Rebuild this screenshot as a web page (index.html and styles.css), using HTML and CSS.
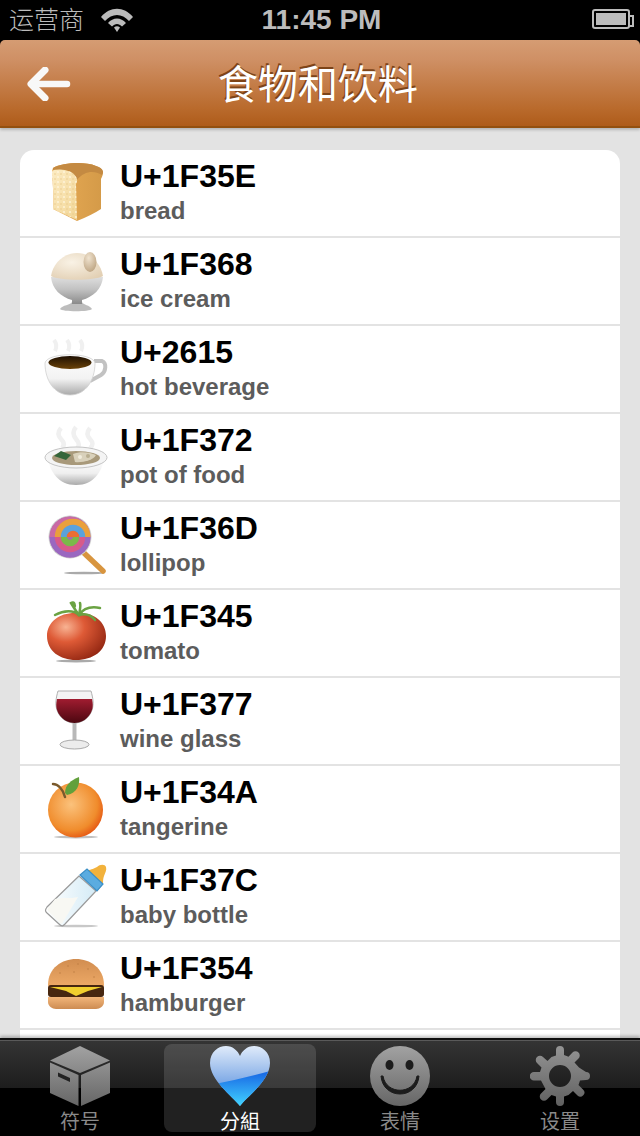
FILE: index.html
```html
<!DOCTYPE html>
<html lang="zh">
<head>
<meta charset="utf-8">
<title>食物和饮料</title>
<link rel="stylesheet" href="styles.css">
</head>
<body>
<div class="app">
  <div class="status">
    <div class="status-left">
      <span class="carrier">运营商</span>
      <svg class="wifi" viewBox="0 0 32 24"><g fill="#bbb"><path d="M0 9C9-2 23-2 32 9L28 13C21 5 11 5 4 13Z"/><path d="M7 15C12 9 20 9 25 15L21 18.500C18 15 14 15 11 18.500Z"/><path d="M13 19.500Q16 17 19 19.500L16 24Z"/></g></svg>
    </div>
    <span class="time">11:45 PM</span>
    <div class="battery"><div class="battery-fill"></div></div>
  </div>
  <header class="nav">
    <svg class="back" width="44" height="34" viewBox="0 0 44 34"><path d="M18 3L4 17L18 31" fill="none" stroke="#f8f8f8" stroke-width="7" stroke-linecap="round" stroke-linejoin="round"/><path d="M6 17H40" fill="none" stroke="#f8f8f8" stroke-width="6.500" stroke-linecap="round"/></svg>
    <h1 class="title">食物和饮料</h1>
  </header>
  <main class="content">
    <ul class="card">
      <li class="row">
        <svg class="emoji" viewBox="0 0 64 64"><defs><linearGradient id="brA" x1="0" y1="0" x2="1" y2="1"><stop offset="0" stop-color="#fcecc4"/><stop offset="1" stop-color="#f2d595"/></linearGradient><linearGradient id="brB" x1="0" y1="0" x2="1" y2="0"><stop offset="0" stop-color="#e8ab55"/><stop offset="1" stop-color="#d49a48"/></linearGradient><pattern id="brP" width="6" height="5" patternUnits="userSpaceOnUse"><circle cx="2" cy="2" r="1.100" fill="#fff6de" fill-opacity=".8"/><circle cx="5" cy="4" r=".9" fill="#e9c98a" fill-opacity=".6"/></pattern></defs><path d="M9 8C18 3 40 1 52 6C60 8 60 14 57 19L57 49Q48 55 33 61L9 49C10 38 9 26 8 15C8 12 8 10 9 8Z" fill="url(#brB)"/><path d="M9 8C18 3 40 1 52 6C60 8 60 13 58 15C50 10 40 11 33 20C28 11 16 9 9 10Z" fill="#c48a42"/><path d="M10 10C18 8 30 11 32 17C34 20 33 22 32 24L33 60L9 49C10 38 9 26 8 15C8 12 8 11 10 10Z" fill="url(#brA)"/><path d="M10 10C18 8 30 11 32 17C34 20 33 22 32 24L33 60L9 49C10 38 9 26 8 15C8 12 8 11 10 10Z" fill="url(#brP)"/></svg>
        <div class="labels"><span class="code">U+1F35E</span><span class="name">bread</span></div>
      </li>
      <li class="row">
        <svg class="emoji" viewBox="0 0 64 64"><defs><linearGradient id="icB" x1="0" y1="0" x2="0" y2="1"><stop offset="0" stop-color="#dedede"/><stop offset=".45" stop-color="#c2c2c2"/><stop offset="1" stop-color="#8a8a8a"/></linearGradient><radialGradient id="icS" cx=".4" cy=".35" r=".75"><stop offset="0" stop-color="#f9f2e5"/><stop offset="1" stop-color="#e2cfb3"/></radialGradient><radialGradient id="icN" cx=".4" cy=".3" r=".8"><stop offset="0" stop-color="#f0e3cf"/><stop offset="1" stop-color="#b99f7c"/></radialGradient></defs><path d="M16 61C18 57 27 57 28 54H38C39 57 46 57 48 61C46 64 18 64 16 61Z" fill="#bdbdbd"/><path d="M7 29H59C58 41 49 49 38 52V56H28V52C17 49 8 41 7 29Z" fill="url(#icB)"/><path d="M7 28C9 15 20 5 33 5C46 5 57 15 59 28C50 33 16 33 7 28Z" fill="url(#icS)"/><ellipse cx="46" cy="14" rx="6.500" ry="10" fill="url(#icN)"/></svg>
        <div class="labels"><span class="code">U+1F368</span><span class="name">ice cream</span></div>
      </li>
      <li class="row">
        <svg class="emoji" viewBox="0 0 64 64"><defs><linearGradient id="cpB" x1="0" y1="0" x2="0" y2="1"><stop offset="0" stop-color="#fff"/><stop offset=".6" stop-color="#f2f2f2"/><stop offset="1" stop-color="#a9a9a9"/></linearGradient><linearGradient id="cpC" x1="0" y1="0" x2="0" y2="1"><stop offset="0" stop-color="#1e1003"/><stop offset="1" stop-color="#6a4208"/></linearGradient></defs><path d="M10 4Q14 9 11 15M23 4Q27 9 24 15M36 4Q40 9 37 15" fill="none" stroke="#f0f0f0" stroke-width="4"/><path d="M50 25H58C63 27 62 36 57 39L46 45" fill="none" stroke="#c2c2c2" stroke-width="4"/><path d="M1 27C3 16 49 16 51 27C51 44 42 59 26 59C10 59 1 44 1 27Z" fill="url(#cpB)" stroke="#d0d0d0" stroke-width=".8"/><ellipse cx="26" cy="26.500" rx="21.500" ry="6.500" fill="url(#cpC)"/></svg>
        <div class="labels"><span class="code">U+2615</span><span class="name">hot beverage</span></div>
      </li>
      <li class="row">
        <svg class="emoji" viewBox="0 0 64 64"><defs><linearGradient id="ptB" x1="0" y1="0" x2="0" y2="1"><stop offset="0" stop-color="#fff"/><stop offset=".55" stop-color="#efefef"/><stop offset="1" stop-color="#aaa"/></linearGradient></defs><path d="M17 4Q12 10 17 15T18 24M32 3Q27 9 32 15T33 24M46 4Q41 10 46 15T46 24" fill="none" stroke="#f0f0f0" stroke-width="4.500"/><path d="M4 35C6 47 14 61 32 61C50 61 58 47 60 35Z" fill="url(#ptB)"/><ellipse cx="32" cy="33.500" rx="31" ry="10.500" fill="#f4f4f4" stroke="#c4c4c4"/><ellipse cx="32" cy="34" rx="24" ry="7" fill="#a8997a"/><path d="M10 32L17 27L27 31L22 36Z" fill="#35663a"/><path d="M29 30C36 27 46 28 52 31C50 36 38 39 31 38Z" fill="#d9d1bb"/><circle cx="36" cy="33" r="2" fill="#f1ecdc"/><circle cx="44" cy="32" r="2" fill="#b9ae90"/></svg>
        <div class="labels"><span class="code">U+1F372</span><span class="name">pot of food</span></div>
      </li>
      <li class="row">
        <svg class="emoji" viewBox="0 0 64 64"><defs><clipPath id="llC"><circle cx="26" cy="25" r="20.500"/></clipPath></defs><ellipse cx="40" cy="61" rx="20" ry="1.300" fill="#aaa"/><path d="M40 41L59 59" stroke="#d8953f" stroke-width="5.500" stroke-linecap="round"/><circle cx="26" cy="25" r="21.500" fill="#cfcfcf"/><g clip-path="url(#llC)"><circle cx="26" cy="25" r="21" fill="#a868b0"/><g transform="translate(26 25)" fill="none" stroke-width="6.500"><path d="M-18 0A21 21 0 0 1 24 0" stroke="#c96aa5"/><path d="M18 0A18 18 0 0 1 -18 0" stroke="#9a68c0"/><path d="M-12 0A15 15 0 0 1 18 0" stroke="#e9a03c"/><path d="M12 0A12 12 0 0 1 -12 0" stroke="#d75a8a"/><path d="M-6 0A9 9 0 0 1 12 0" stroke="#5aa2dc"/><path d="M6 0A6 6 0 0 1 -6 0" stroke="#7ab94a"/><path d="M0 0A3 3 0 0 1 6 0" stroke="#ec6d33"/></g></g></svg>
        <div class="labels"><span class="code">U+1F36D</span><span class="name">lollipop</span></div>
      </li>
      <li class="row">
        <svg class="emoji" viewBox="0 0 64 64"><defs><radialGradient id="tmR" cx=".32" cy=".3" r=".8"><stop offset="0" stop-color="#f8b393"/><stop offset=".4" stop-color="#de5a36"/><stop offset="1" stop-color="#8f2410"/></radialGradient></defs><ellipse cx="32" cy="61" rx="20" ry="1.400" fill="#aaa"/><path d="M3 36C3 21 17 12 33 13C49 12 62 21 62 36C62 51 49 60 32 60C16 60 3 51 3 36Z" fill="url(#tmR)"/><g fill="none" stroke="#6ba343" stroke-width="2.500" stroke-linecap="round"><path d="M35 15C30 10 20 10 11 15"/><path d="M35 15C31 10 29 6 27 3C30 1 32 5 30 8"/><path d="M35 15C39 9 46 6 56 8"/><path d="M35 15C42 13 47 15 51 20"/><path d="M35 15C36 9 37 6 36 3"/></g></svg>
        <div class="labels"><span class="code">U+1F345</span><span class="name">tomato</span></div>
      </li>
      <li class="row">
        <svg class="emoji" viewBox="0 0 64 64"><defs><linearGradient id="wnR" x1="0" y1="0" x2="0" y2="1"><stop offset="0" stop-color="#a01c30"/><stop offset="1" stop-color="#4c0710"/></linearGradient></defs><path d="M14 3H47C49 10 50 16 48 22C45 31 37 35 30.500 35C24 35 16 31 13 22C11 16 12 10 14 3Z" fill="#f4f4f4" stroke="#b0b0b0"/><path d="M13 11H48C49 16 49 19 48 22C45 31 37 35 30.500 35C24 35 16 31 13 22C12 19 12 16 13 11Z" fill="url(#wnR)"/><path d="M28.500 35H32.500V54H28.500Z" fill="#b8b8b8"/><ellipse cx="30.500" cy="56.500" rx="14.500" ry="4.500" fill="#ececec" stroke="#aaa"/></svg>
        <div class="labels"><span class="code">U+1F377</span><span class="name">wine glass</span></div>
      </li>
      <li class="row">
        <svg class="emoji" viewBox="0 0 64 64"><defs><radialGradient id="tgR" cx=".42" cy=".4" r=".68"><stop offset="0" stop-color="#fbc27c"/><stop offset=".7" stop-color="#f08c2c"/><stop offset="1" stop-color="#e2480c"/></radialGradient></defs><ellipse cx="32" cy="61" rx="22" ry="1.400" fill="#c0c0c0"/><circle cx="31.500" cy="34" r="27.500" fill="url(#tgR)"/><path d="M9 8C14 8 19 13 21 21" fill="none" stroke="#7a5a2c" stroke-width="2.500" stroke-linecap="round"/><path d="M21 17C21 9 27 4 35 1C36 9 33 17 23 19Z" fill="#62a03b"/></svg>
        <div class="labels"><span class="code">U+1F34A</span><span class="name">tangerine</span></div>
      </li>
      <li class="row">
        <svg class="emoji" viewBox="0 0 64 64"><defs><linearGradient id="btG" x1="0" y1="0" x2="1" y2="0"><stop offset="0" stop-color="#fff"/><stop offset="1" stop-color="#d4ebf6"/></linearGradient></defs><ellipse cx="32" cy="62" rx="22" ry="1.300" fill="#c8c8c8"/><path d="M35 12L3 43C1 46 1 47 3 49L15 60C18 63 19 62 21 60L52 27Z" fill="url(#btG)" stroke="#9a9a9a" stroke-width="1.200"/><path d="M11 35C18 33 26 35 34 33L19 58C18 60 17 60 15 58L5 48C3 46 3 45 5 43Z" fill="#f8f8f3"/><path d="M43 6C48 6 50 4 53 3C56 0 61 0 62 3C63 6 61 9 60 12C59 15 59 17 59 20Z" fill="#f2b23c"/><path d="M36 11L43 5L59 20L53 27Z" fill="#5bace0" stroke="#3b8fc6" stroke-width="1.200"/></svg>
        <div class="labels"><span class="code">U+1F37C</span><span class="name">baby bottle</span></div>
      </li>
      <li class="row">
        <svg class="emoji" viewBox="0 0 64 64"><defs><linearGradient id="hbT" x1="0" y1="0" x2="0" y2="1"><stop offset="0" stop-color="#d18d50"/><stop offset="1" stop-color="#efab68"/></linearGradient><linearGradient id="hbB" x1="0" y1="0" x2="0" y2="1"><stop offset="0" stop-color="#f2b67a"/><stop offset="1" stop-color="#cd8c52"/></linearGradient></defs><path d="M4 33C4 16 18 7 32 7C46 7 60 16 60 33C60 35 58 36 56 36H8C6 36 4 35 4 33Z" fill="url(#hbT)"/><g fill="#b97a40"><circle cx="24" cy="14" r=".7"/><circle cx="34" cy="12" r=".7"/><circle cx="44" cy="17" r=".7"/><circle cx="16" cy="21" r=".7"/><circle cx="30" cy="20" r=".7"/><circle cx="50" cy="25" r=".7"/></g><path d="M4 36C4 34 5 33 7 33H57C59 33 60 34 60 36V42C60 44 59 45 57 45H7C5 45 4 44 4 42Z" fill="#472710"/><path d="M6 35H58L44 39L32 44L22 39Z" fill="#f1cf2e"/><path d="M4 45H60V50C60 54 56 57 52 57H12C8 57 4 54 4 50Z" fill="url(#hbB)"/></svg>
        <div class="labels"><span class="code">U+1F354</span><span class="name">hamburger</span></div>
      </li>
      <li class="row"></li>
    </ul>
  </main>
  <nav class="tabbar">
    <div class="tab">
      <svg class="tab-icon" viewBox="0 0 60 60"><defs><linearGradient id="gy" gradientUnits="userSpaceOnUse" x1="0" y1="0" x2="0" y2="60"><stop offset="0" stop-color="#a2a2a2"/><stop offset="1" stop-color="#666"/></linearGradient></defs><path d="M30 0L60 14.500L30 27L0 14.500Z" fill="url(#gy)"/><path d="M0 16.500L28.500 29V60L0 47Z" fill="url(#gy)"/><path d="M31 29L60 16.500V47L31 60Z" fill="url(#gy)"/><path d="M8 26.500L20 32V36L8 30.500Z" fill="#222"/></svg>
      <span class="tab-label">符号</span>
    </div>
    <div class="tab tab-active">
      <svg class="tab-icon" viewBox="0 0 60 60"><defs><linearGradient id="hrB" x1="0" y1="0" x2="0" y2="1"><stop offset="0" stop-color="#e0ebfa"/><stop offset=".6" stop-color="#7faae6"/></linearGradient><linearGradient id="hrC" gradientUnits="userSpaceOnUse" x1="0" y1="28" x2="0" y2="60"><stop offset="0" stop-color="#1a6de6"/><stop offset="1" stop-color="#42d4ff"/></linearGradient><clipPath id="hrS"><path d="M30 60C22 50 0 34 0 17C0 6 8 0 16 0C23 0 28 5 30 10C32 5 37 0 44 0C52 0 60 6 60 17C60 34 38 50 30 60Z"/></clipPath></defs><g clip-path="url(#hrS)"><rect width="60" height="60" fill="url(#hrB)"/><path d="M0 39Q28 34 60 25V60H0Z" fill="url(#hrC)"/></g></svg>
      <span class="tab-label">分組</span>
    </div>
    <div class="tab">
      <svg class="tab-icon" viewBox="0 0 60 60"><defs><linearGradient id="smB" x1="0" y1="0" x2="0" y2="1"><stop offset="0" stop-color="#a2a2a2"/><stop offset="1" stop-color="#666"/></linearGradient></defs><circle cx="30" cy="30" r="30" fill="url(#smB)"/><ellipse cx="19.500" cy="19" rx="4" ry="5" fill="#1c1c1c"/><ellipse cx="39.500" cy="19" rx="4" ry="5" fill="#1c1c1c"/><path d="M11 30C13 54 47 54 49 30L47 30C44 49 16 49 13 30Z" fill="#1c1c1c" stroke="#1c1c1c" stroke-linejoin="round"/></svg>
      <span class="tab-label">表情</span>
    </div>
    <div class="tab">
      <svg class="tab-icon" viewBox="0 0 60 60"><defs><linearGradient id="grB" gradientUnits="userSpaceOnUse" x1="0" y1="0" x2="0" y2="60"><stop offset="0" stop-color="#949494"/><stop offset="1" stop-color="#606060"/></linearGradient></defs><path fill-rule="evenodd" fill="url(#grB)" d="M26 4A4 4 0 0 1 34 4V9L38.500 10.800L42.500 6.500A4 4 0 0 1 48.500 12.500L44.500 16.500L49 21.500L56 26A4 4 0 0 1 56 34L50 34.500L48.500 39L53 43.500A4 4 0 0 1 47.500 49.500L43 45L38.500 49L34 50.500V56A4 4 0 0 1 26 56V50.500L21.500 49L17 53.500A4 4 0 0 1 11 47.500L15.500 43L11 34.500H4A4 4 0 0 1 4 26H10L11.500 21.500L7 17A4 4 0 0 1 13 11L17.500 15L21.500 11L26 9.500ZM30 19A11 11 0 1 0 30 41A11 11 0 1 0 30 19Z"/></svg>
      <span class="tab-label">设置</span>
    </div>
  </nav>
</div>
</body>
</html>
```
FILE: styles.css
```css
* { box-sizing: border-box; margin: 0; padding: 0; }
html, body { width: 640px; height: 1136px; overflow: hidden; background: #000; }
.app { width: 640px; height: 1136px; display: flex; flex-direction: column; font-family: "Liberation Sans", "Noto Sans CJK SC", sans-serif; }
.status { height: 40px; flex: none; background: #000; color: #bcbcbc; display: grid; grid-template-columns: 1fr auto 1fr; align-items: center; padding: 0 10px 0 9px; }
.status-left { display: flex; align-items: center; gap: 17px; }
.carrier { font-size: 25px; line-height: 40px; margin-top: -4px; font-family: "Noto Sans CJK SC", sans-serif; font-weight: 300; }
.wifi { display: block; margin-top: 0; width: 32px; height: 24px; }
.time { font-size: 28px; font-weight: 700; margin-left: 4px; }
.battery { justify-self: end; width: 38px; height: 20px; border: 2px solid #bcbcbc; border-radius: 3px; padding: 2px; position: relative; margin-top: -2px; }
.battery::after { content: ""; position: absolute; right: -6px; top: 4px; width: 4px; height: 8px; border: 2px solid #bcbcbc; border-left: 0; }
.battery-fill { height: 100%; background: #bcbcbc; }
.nav { height: 88px; flex: none; position: relative; z-index: 2; border-radius: 5px 5px 0 0; background: linear-gradient(#d59c73 0, #cf9065 22%, #b96a2c 78%, #ad5a18 100%); box-shadow: inset 0 -2px 0 #93500f, 0 2px 3px rgba(0,0,0,.2); display: flex; align-items: center; justify-content: center; }
.back { position: absolute; left: 27px; top: 27px; }
.title { font-size: 40px; font-weight: 400; color: #fff; line-height: 88px; margin: -4px 4px 0 0; font-family: "Noto Sans CJK SC", sans-serif; text-shadow: -1px -2px 0 #7d4418; }
.content { flex: 1; min-height: 0; background: #e3e3e3; padding: 22px 20px 0; overflow: hidden; }
.card { list-style: none; background: #fff; border-radius: 14px 14px 0 0; }
.row { height: 88px; border-bottom: 2px solid #e3e3e3; display: flex; align-items: center; padding-left: 24px; gap: 12px; }
.emoji { width: 64px; height: 64px; flex: none; margin-top: -2px; }
.labels { display: flex; flex-direction: column; margin-top: -2px; }
.code { font-size: 32px; line-height: 36px; font-weight: 700; color: #000; }
.name { font-size: 24px; line-height: 32px; font-weight: 700; color: #5c5c5c; padding-top: 1px; }
.tabbar { height: 98px; flex: none; position: absolute; left: 0; top: 1038px; width: 640px; display: grid; grid-template-columns: 160px 160px 160px 160px; background: linear-gradient(#0d0d0d 0, #0d0d0d 2px, #5a5a5a 2px, #5a5a5a 3px, #343434 3px, #1d1d1d 50px, #000 50px); box-shadow: 0 -2px 3px rgba(0,0,0,.25); }
.tab { display: flex; flex-direction: column; align-items: center; padding-top: 8px; color: #8a8a8a; position: relative; }
.tab-active { color: #fff; }
.tab-active::before { content: ""; position: absolute; left: 4px; right: 4px; top: 6px; bottom: 4px; border-radius: 8px; background: rgba(255,255,255,.13); }
.tab-icon { width: 60px; height: 60px; position: relative; display: block; }
.tab-label { font-size: 20px; line-height: 24px; position: relative; font-family: "Noto Sans CJK SC", sans-serif; font-weight: 400; margin-top: 3px; }
```
